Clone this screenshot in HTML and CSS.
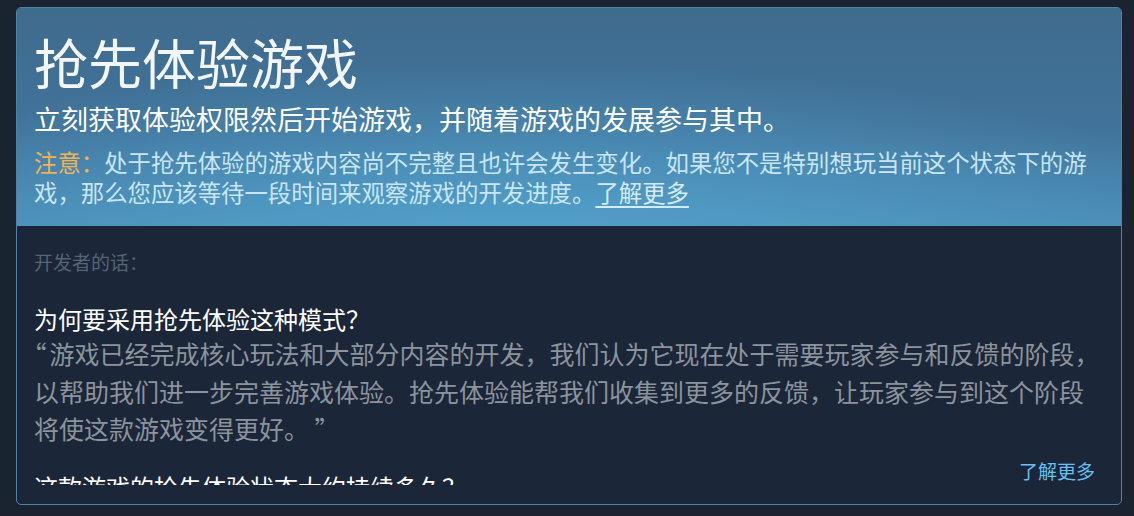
FILE: index.html
```html
<html lang="zh-CN">
<head>
    <meta charset="UTF-8">
    <meta name="viewport" content="width=device-width, initial-scale=1.0">
    <title>抢先体验游戏</title>
    <link rel="stylesheet" href="styles.css">
</head>
<body>

    <div class="ea-box">
        <div class="ea-head">
            <h1 class="ea-title">抢先体验游戏</h1>
            <p class="ea-sub">立刻获取体验权限然后开始游戏，并随着游戏的发展参与其中。</p>
            <p class="ea-note"><span class="ea-warn">注意：</span>处于抢先体验的游戏内容尚不完整且也许会发生变化。如果您不是特别想玩当前这个状态下的游戏，那么您应该等待一段时间来观察游戏的开发进度。<a href="#" class="ea-note-link">了解更多</a></p>
        </div>

        <div class="ea-body">
            <div class="ea-content">
                <div class="ea-label">开发者的话：</div>

                <h2 class="ea-q">为何要采用抢先体验这种模式？</h2>
                <p class="ea-a"><span class="ea-open">“</span>游戏已经完成核心玩法和大部分内容的开发，我们认为它现在处于需要玩家参与和反馈的阶段，以帮助我们进一步完善游戏体验。抢先体验能帮我们收集到更多的反馈，让玩家参与到这个阶段将使这款游戏变得更好。 ”</p>

                <h2 class="ea-q">这款游戏的抢先体验状态大约持续多久？</h2>
                <p class="ea-a"><span class="ea-open">“</span>我们预计抢先体验阶段将持续大约六个月到一年的时间。 ”</p>
            </div>
            <a href="#" class="ea-more">了解更多</a>
        </div>
    </div>

</body>
</html>
```

FILE: styles.css
```css
body {
    margin: 0;
    background-color: #1b2331;
    font-family: "Noto Sans CJK SC", "Noto Sans", sans-serif;
}
.ea-box {
    width: 1104px;
    margin: 7px 0 0 16px;
    border: 1px solid #4b84a8;
    border-radius: 5px;
    overflow: hidden;
    background-color: #1b2638;
}
.ea-head {
    padding: 24px 17px 19px 17px;
    background: radial-gradient(ellipse 70% 90% at 45% 115%, #52a2cd 0%, rgba(82, 162, 205, 0) 100%),
                linear-gradient(180deg, #3f6b8d 0%, #41739a 55%, #4a8bb4 100%);
}
.ea-title {
    margin: 0;
    font-size: 54px;
    line-height: 60px;
    font-weight: normal;
    color: #f4f7fa;
}
.ea-sub {
    margin: 9px 0 0 0;
    font-size: 27px;
    line-height: 36px;
    color: #ffffff;
}
.ea-note {
    margin: 10px 0 0 0;
    font-size: 23.4px;
    line-height: 30px;
    color: #c9e6f8;
}
.ea-warn {
    color: #f2b44e;
}
.ea-note-link {
    color: #d4ecfa;
    text-decoration: underline;
    text-underline-offset: 4px;
}
.ea-body {
    position: relative;
    padding: 23px 17px 19px 17px;
}
.ea-content {
    height: 236px;
    overflow: hidden;
}
.ea-label {
    font-size: 19px;
    line-height: 26px;
    color: #566474;
}
.ea-q {
    margin: 28px 0 0 0;
    font-size: 24px;
    line-height: 32px;
    font-weight: normal;
    color: #ffffff;
}
.ea-a {
    margin: 0 0 23px 0;
    font-size: 25px;
    line-height: 37.5px;
    color: #8b949d;
}
.ea-open {
    font-feature-settings: "halt";
    margin-right: 3px;
}
.ea-a + .ea-q {
    margin-top: 0;
}
.ea-more {
    position: absolute;
    right: 26px;
    bottom: 20px;
    font-size: 19px;
    line-height: 26px;
    color: #66c0f4;
    text-decoration: none;
}
```
